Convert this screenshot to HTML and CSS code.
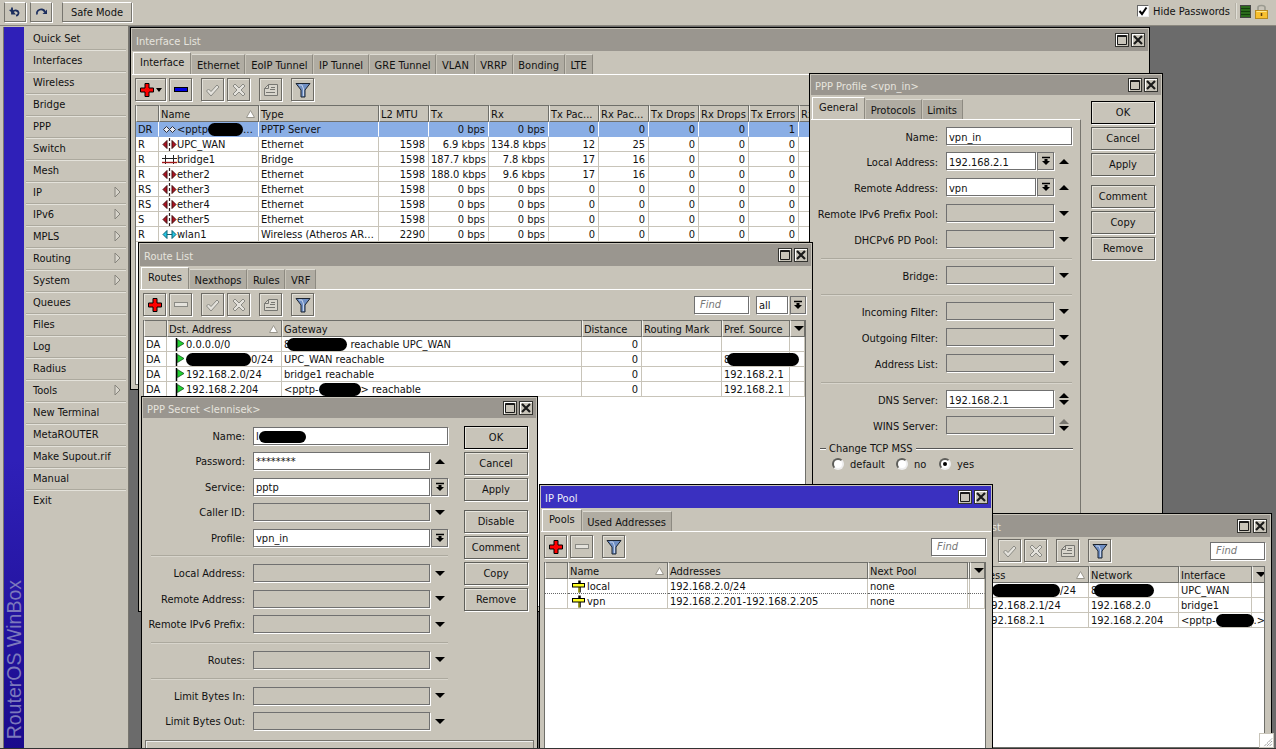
FILE: index.html
```html
<!DOCTYPE html>
<html lang="en">
<head>
<meta charset="utf-8">
<title>RouterOS WinBox</title>
<link rel="stylesheet" href="styles.css">
</head>
<body>
<svg class="defs" xmlns="http://www.w3.org/2000/svg">
  <symbol id="i-add" viewBox="0 0 16 16"><path d="M6 1.500h4v4.500h4.500v4H10v4.500H6V10H1.500V6H6z" fill="#f00" stroke="#000"/></symbol>
  <symbol id="i-minus" viewBox="0 0 16 16"><rect x="1.500" y="5.500" width="13" height="4" fill="#0000e0" stroke="#000"/></symbol>
  <symbol id="i-minus-off" viewBox="0 0 16 16"><rect x="1.500" y="5.500" width="13" height="4" fill="#e4e2dc" stroke="#8a8a84"/></symbol>
  <symbol id="i-check" viewBox="0 0 16 16"><path d="M1.500 9l2-2 2.500 2.500 6-6.500 2 2-8 9z" fill="#e4e2dc" stroke="#8a8a84"/></symbol>
  <symbol id="i-x" viewBox="0 0 16 16"><path d="M2 4l2-2 4 4 4-4 2 2-4 4 4 4-2 2-4-4-4 4-2-2 4-4z" fill="#e4e2dc" stroke="#8a8a84"/></symbol>
  <symbol id="i-note" viewBox="0 0 16 16"><path d="M5.500 2.500h9v11h-13v-7z" fill="#d8d5cc" stroke="#777772"/><path d="M5.500 2.500v4h-4M8 5.500h4M7 7.500h5M3 10.500h9" fill="none" stroke="#777772"/></symbol>
  <symbol id="i-filter" viewBox="0 0 16 16"><path d="M1 1.500h14l-5 6.500v7H6V8z" fill="#6f8fc4" stroke="#1c2430"/><path d="M4 3h3l1.500 4v7" fill="none" stroke="#c4d2ea"/></symbol>
  <symbol id="i-eth" viewBox="0 0 15 13"><path d="M5 2.500L1 6.500l4 4zM10 2.500l4 4-4 4z" fill="#b01020" stroke="#401010"/><path d="M7.500 0v3M7.500 5v3M7.500 10v3" stroke="#302020" stroke-width="1.200"/></symbol>
  <symbol id="i-bridge" viewBox="0 0 15 13"><path d="M3.500 2v9M11.500 2v9M0 5.500h15" stroke="#222" fill="none"/><path d="M0 9.500h15" stroke="#a01818" stroke-width="1.400"/></symbol>
  <symbol id="i-wlan" viewBox="0 0 15 13"><path d="M5 2.500L1 6.500l4 4zM10 2.500l4 4-4 4z" fill="#20c8e8" stroke="#106070"/><path d="M5 6.500h5" stroke="#106070"/></symbol>
  <symbol id="i-pptp" viewBox="0 0 15 13"><path d="M4.500 3.500L1.500 6.500l3 3 3-3zM10.500 3.500l-3 3 3 3 3-3z" fill="#e8ecf6" stroke="#30303a"/></symbol>
  <symbol id="i-flag" viewBox="0 0 10 13"><path d="M1.500 0v13" stroke="#000" stroke-width="1.500"/><path d="M2.500 1.500l6.500 4-6.500 4z" fill="#20d030" stroke="#0a4010" stroke-width=".7"/></symbol>
  <symbol id="i-pool" viewBox="0 0 14 13"><path d="M7.500 .500v12" stroke="#000" stroke-width="2.500"/><rect x=".5" y="3.500" width="12" height="3.500" fill="#ffff20" stroke="#000"/><path d="M7 7.500v5" stroke="#ffff20"/></symbol>
  <symbol id="i-max" viewBox="0 0 10 10"><path d="M.5 .5h9v9h-9zM.5 1.500h9" fill="none" stroke="#1a1a1a"/></symbol>
  <symbol id="i-close" viewBox="0 0 10 10"><path d="M1 1l8 8M9 1l-8 8" stroke="#1a1a1a" stroke-width="2.200"/></symbol>
  <symbol id="i-drop" viewBox="0 0 10 10"><path d="M1 1.500h8" stroke="#000" stroke-width="1.500"/><path d="M3.500 3v2H1l4 4 4-4H6.500V3z" fill="#000"/></symbol>
  <symbol id="i-sort" viewBox="0 0 9 8"><path d="M4.500 .5L8.500 7.500H.5z" fill="#fff" stroke="#99968c"/></symbol>
  <symbol id="i-right" viewBox="0 0 7 12"><path d="M1 1l5 5-5 5z" fill="#d8d5cc" stroke="#86847c"/></symbol>
  <symbol id="i-undo" viewBox="0 0 14 12"><path d="M4 1.500v6h2L4.800 6C6 3.800 10 4 10.500 6.500c.3 1.700-1 3-2.500 3.200" fill="none" stroke="#1c2e5e" stroke-width="1.800"/><path d="M1 4l4 4V3z" fill="#1c2e5e"/></symbol>
  <symbol id="i-redo" viewBox="0 0 14 12"><path d="M3 8.500C2 5.500 5 3 8 3.500c1.800.3 2.500 1.500 2.500 2.500" fill="none" stroke="#1c2e5e" stroke-width="1.800"/><path d="M13 3.500l-4.500 4.500h4.500z" fill="#1c2e5e"/></symbol>
  <symbol id="i-lock" viewBox="0 0 13 15"><path d="M3 7V3.500C3 .8 10 .8 10 3.500V7" fill="none" stroke="#9a9a90" stroke-width="1.600"/><rect x=".5" y="6.500" width="12" height="8" fill="#f8c030" stroke="#b88a20"/><path d="M1.500 7.500h10" stroke="#ffe890"/><path d="M6.500 9v3" stroke="#604010" stroke-width="1.500"/></symbol>
</svg>

<div class="app">
  <header class="topbar">
    <button class="tbtn tbtn-ic"><svg class="ic14"><use href="#i-undo"/></svg></button>
    <button class="tbtn tbtn-ic"><svg class="ic14"><use href="#i-redo"/></svg></button>
    <button class="tbtn tbtn-safe">Safe Mode</button>
    <div class="top-right">
      <span class="checkbox"><svg class="chk" viewBox="0 0 10 10"><path d="M1.500 5l2.500 3L8.500 1.500" fill="none" stroke="#000" stroke-width="2"/></svg></span>
      <span class="hide-label">Hide Passwords</span>
      <span class="vsep"></span>
      <span class="led"></span>
      <svg class="lock"><use href="#i-lock"/></svg>
    </div>
  </header>

  <div class="main">
    <aside class="sidebar">
      <div class="brand"><span class="brand-text">RouterOS WinBox</span></div>
      <nav class="menu">
        <div class="mi">Quick Set</div>
        <div class="mi">Interfaces</div>
        <div class="mi">Wireless</div>
        <div class="mi">Bridge</div>
        <div class="mi">PPP</div>
        <div class="mi">Switch</div>
        <div class="mi">Mesh</div>
        <div class="mi">IP<svg class="arrow"><use href="#i-right"/></svg></div>
        <div class="mi">IPv6<svg class="arrow"><use href="#i-right"/></svg></div>
        <div class="mi">MPLS<svg class="arrow"><use href="#i-right"/></svg></div>
        <div class="mi">Routing<svg class="arrow"><use href="#i-right"/></svg></div>
        <div class="mi">System<svg class="arrow"><use href="#i-right"/></svg></div>
        <div class="mi">Queues</div>
        <div class="mi">Files</div>
        <div class="mi">Log</div>
        <div class="mi">Radius</div>
        <div class="mi">Tools<svg class="arrow"><use href="#i-right"/></svg></div>
        <div class="mi">New Terminal</div>
        <div class="mi">MetaROUTER</div>
        <div class="mi">Make Supout.rif</div>
        <div class="mi">Manual</div>
        <div class="mi">Exit</div>
      </nav>
    </aside>

    <section class="desktop">

      <!-- Interface List -->
      <div class="win win-iface">
        <div class="title"><span>Interface List</span><span class="wbtns"><span class="wbtn"><svg class="ic10"><use href="#i-max"/></svg></span><span class="wbtn"><svg class="ic10"><use href="#i-close"/></svg></span></span></div>
        <div class="tabs">
          <span class="tab on">Interface</span><span class="tab">Ethernet</span><span class="tab">EoIP Tunnel</span><span class="tab">IP Tunnel</span><span class="tab">GRE Tunnel</span><span class="tab">VLAN</span><span class="tab">VRRP</span><span class="tab">Bonding</span><span class="tab">LTE</span>
        </div>
        <div class="panel">
          <div class="toolbar">
            <button class="ib ib-wide"><svg class="ic16"><use href="#i-add"/></svg><span class="caret"></span></button>
            <button class="ib"><svg class="ic16"><use href="#i-minus"/></svg></button>
            <button class="ib sp"><svg class="ic16"><use href="#i-check"/></svg></button>
            <button class="ib"><svg class="ic16"><use href="#i-x"/></svg></button>
            <button class="ib sp"><svg class="ic16"><use href="#i-note"/></svg></button>
            <button class="ib sp"><svg class="ic16"><use href="#i-filter"/></svg></button>
          </div>
          <div class="list">
            <table class="grid grid-iface">
              <colgroup><col class="w23"><col class="w100"><col class="w120"><col class="w50"><col class="w60"><col class="w60"><col class="w50"><col class="w50"><col class="w50"><col class="w50"><col class="w50"><col class="w60"></colgroup>
              <thead><tr><th></th><th class="sorted">Name<svg class="sort"><use href="#i-sort"/></svg></th><th>Type</th><th>L2 MTU</th><th>Tx</th><th>Rx</th><th>Tx Pac...</th><th>Rx Pac...</th><th>Tx Drops</th><th>Rx Drops</th><th>Tx Errors</th><th>Rx Errors</th></tr></thead>
              <tbody>
                <tr class="sel"><td>DR</td><td class="nm"><svg class="ic-if"><use href="#i-pptp"/></svg>&lt;pptp<span class="pill p35"></span>e...</td><td>PPTP Server</td><td class="r"></td><td class="r">0 bps</td><td class="r">0 bps</td><td class="r">0</td><td class="r">0</td><td class="r">0</td><td class="r">0</td><td class="r">1</td><td class="r">0</td></tr>
                <tr><td>R</td><td class="nm"><svg class="ic-if"><use href="#i-eth"/></svg>UPC_WAN</td><td>Ethernet</td><td class="r">1598</td><td class="r">6.9 kbps</td><td class="r">134.8 kbps</td><td class="r">12</td><td class="r">25</td><td class="r">0</td><td class="r">0</td><td class="r">0</td><td class="r">0</td></tr>
                <tr><td>R</td><td class="nm"><svg class="ic-if"><use href="#i-bridge"/></svg>bridge1</td><td>Bridge</td><td class="r">1598</td><td class="r">187.7 kbps</td><td class="r">7.8 kbps</td><td class="r">17</td><td class="r">16</td><td class="r">0</td><td class="r">0</td><td class="r">0</td><td class="r">0</td></tr>
                <tr><td>R</td><td class="nm"><svg class="ic-if"><use href="#i-eth"/></svg>ether2</td><td>Ethernet</td><td class="r">1598</td><td class="r">188.0 kbps</td><td class="r">9.6 kbps</td><td class="r">17</td><td class="r">16</td><td class="r">0</td><td class="r">0</td><td class="r">0</td><td class="r">0</td></tr>
                <tr><td>RS</td><td class="nm"><svg class="ic-if"><use href="#i-eth"/></svg>ether3</td><td>Ethernet</td><td class="r">1598</td><td class="r">0 bps</td><td class="r">0 bps</td><td class="r">0</td><td class="r">0</td><td class="r">0</td><td class="r">0</td><td class="r">0</td><td class="r">0</td></tr>
                <tr><td>RS</td><td class="nm"><svg class="ic-if"><use href="#i-eth"/></svg>ether4</td><td>Ethernet</td><td class="r">1598</td><td class="r">0 bps</td><td class="r">0 bps</td><td class="r">0</td><td class="r">0</td><td class="r">0</td><td class="r">0</td><td class="r">0</td><td class="r">0</td></tr>
                <tr><td>S</td><td class="nm"><svg class="ic-if"><use href="#i-eth"/></svg>ether5</td><td>Ethernet</td><td class="r">1598</td><td class="r">0 bps</td><td class="r">0 bps</td><td class="r">0</td><td class="r">0</td><td class="r">0</td><td class="r">0</td><td class="r">0</td><td class="r">0</td></tr>
                <tr><td>R</td><td class="nm"><svg class="ic-if"><use href="#i-wlan"/></svg>wlan1</td><td class="ell">Wireless (Atheros AR9300)</td><td class="r">2290</td><td class="r">0 bps</td><td class="r">0 bps</td><td class="r">0</td><td class="r">0</td><td class="r">0</td><td class="r">0</td><td class="r">0</td><td class="r">0</td></tr>
              </tbody>
            </table>
          </div>
        </div>
      </div>

      <!-- PPP Profile -->
      <div class="win win-profile">
        <div class="title t20"><span>PPP Profile &lt;vpn_in&gt;</span><span class="wbtns"><span class="wbtn"><svg class="ic10"><use href="#i-max"/></svg></span><span class="wbtn"><svg class="ic10"><use href="#i-close"/></svg></span></span></div>
        <div class="dlg">
          <div class="dlg-left">
            <div class="tabs tabs-dlg"><span class="tab on">General</span><span class="tab">Protocols</span><span class="tab">Limits</span></div>
            <div class="form form-profile">
              <div class="row row-first"><label>Name:</label><span class="inp full">vpn_in</span></div>
              <div class="row"><label>Local Address:</label><span class="inp short">192.168.2.1</span><span class="dd"><svg class="ic10"><use href="#i-drop"/></svg></span><span class="tri up"></span></div>
              <div class="row"><label>Remote Address:</label><span class="inp short">vpn</span><span class="dd"><svg class="ic10"><use href="#i-drop"/></svg></span><span class="tri up"></span></div>
              <div class="row"><label>Remote IPv6 Prefix Pool:</label><span class="inp off mid"></span><span class="tri down"></span></div>
              <div class="row"><label>DHCPv6 PD Pool:</label><span class="inp off mid"></span><span class="tri down"></span></div>
              <div class="sep"></div>
              <div class="row"><label>Bridge:</label><span class="inp off mid"></span><span class="tri down"></span></div>
              <div class="sep"></div>
              <div class="row"><label>Incoming Filter:</label><span class="inp off mid"></span><span class="tri down"></span></div>
              <div class="row"><label>Outgoing Filter:</label><span class="inp off mid"></span><span class="tri down"></span></div>
              <div class="row"><label>Address List:</label><span class="inp off mid"></span><span class="tri down"></span></div>
              <div class="sep"></div>
              <div class="row"><label>DNS Server:</label><span class="inp mid">192.168.2.1</span><span class="updown"><span class="tri up"></span><span class="tri down"></span></span></div>
              <div class="row"><label>WINS Server:</label><span class="inp off mid"></span><span class="updown"><span class="tri up dim"></span><span class="tri down"></span></span></div>
              <div class="mss"><span class="mss-dash"></span><span class="mss-text">Change TCP MSS</span><span class="mss-line"></span></div>
              <div class="radios">
                <span class="radio"></span><span class="rlabel r-default">default</span>
                <span class="radio"></span><span class="rlabel r-no">no</span>
                <span class="radio checked"></span><span class="rlabel">yes</span>
              </div>
            </div>
          </div>
          <div class="btns btns-profile">
            <button class="btn def">OK</button>
            <button class="btn">Cancel</button>
            <button class="btn">Apply</button>
            <button class="btn grp">Comment</button>
            <button class="btn">Copy</button>
            <button class="btn">Remove</button>
          </div>
        </div>
      </div>

      <!-- Route List -->
      <div class="win win-route">
        <div class="title"><span>Route List</span><span class="wbtns"><span class="wbtn"><svg class="ic10"><use href="#i-max"/></svg></span><span class="wbtn"><svg class="ic10"><use href="#i-close"/></svg></span></span></div>
        <div class="tabs"><span class="tab on">Routes</span><span class="tab">Nexthops</span><span class="tab">Rules</span><span class="tab">VRF</span></div>
        <div class="panel">
          <div class="toolbar">
            <button class="ib"><svg class="ic16"><use href="#i-add"/></svg></button>
            <button class="ib"><svg class="ic16"><use href="#i-minus-off"/></svg></button>
            <button class="ib sp"><svg class="ic16"><use href="#i-check"/></svg></button>
            <button class="ib"><svg class="ic16"><use href="#i-x"/></svg></button>
            <button class="ib sp"><svg class="ic16"><use href="#i-note"/></svg></button>
            <button class="ib sp"><svg class="ic16"><use href="#i-filter"/></svg></button>
            <span class="find push">Find</span>
            <span class="inp all">all</span>
            <span class="dd dd-all"><svg class="ic10"><use href="#i-drop"/></svg></span>
          </div>
          <div class="list">
            <table class="grid grid-route">
              <colgroup><col class="w23"><col class="w115"><col class="w300"><col class="w60"><col class="w80"><col class="w68"><col class="w15"></colgroup>
              <thead><tr><th></th><th class="sorted">Dst. Address<svg class="sort"><use href="#i-sort"/></svg></th><th>Gateway</th><th>Distance</th><th>Routing Mark</th><th>Pref. Source</th><th class="more"><span class="tri down"></span></th></tr></thead>
              <tbody>
                <tr><td>DA</td><td class="dst"><svg class="ic-flag"><use href="#i-flag"/></svg>0.0.0.0/0</td><td>8<span class="pill p60 back"></span> reachable UPC_WAN</td><td class="r">0</td><td></td><td></td><td></td></tr>
                <tr><td>DA</td><td class="dst"><svg class="ic-flag"><use href="#i-flag"/></svg><span class="pill p65"></span>0/24</td><td>UPC_WAN reachable</td><td class="r">0</td><td></td><td class="vis">8<span class="pill p70 back"></span></td><td></td></tr>
                <tr><td>DA</td><td class="dst"><svg class="ic-flag"><use href="#i-flag"/></svg>192.168.2.0/24</td><td>bridge1 reachable</td><td class="r">0</td><td></td><td>192.168.2.1</td><td></td></tr>
                <tr><td>DA</td><td class="dst"><svg class="ic-flag"><use href="#i-flag"/></svg>192.168.2.204</td><td>&lt;pptp-<span class="pill p42"></span>&gt; reachable</td><td class="r">0</td><td></td><td>192.168.2.1</td><td></td></tr>
              </tbody>
            </table>
          </div>
        </div>
      </div>

      <!-- Address List -->
      <div class="win win-addr">
        <div class="title"><span>Address List</span><span class="wbtns"><span class="wbtn"><svg class="ic10"><use href="#i-max"/></svg></span><span class="wbtn"><svg class="ic10"><use href="#i-close"/></svg></span></span></div>
        <div class="panel panel-plain">
          <div class="toolbar">
            <button class="ib"><svg class="ic16"><use href="#i-add"/></svg></button>
            <button class="ib"><svg class="ic16"><use href="#i-minus-off"/></svg></button>
            <button class="ib sp"><svg class="ic16"><use href="#i-check"/></svg></button>
            <button class="ib"><svg class="ic16"><use href="#i-x"/></svg></button>
            <button class="ib sp"><svg class="ic16"><use href="#i-note"/></svg></button>
            <button class="ib sp"><svg class="ic16"><use href="#i-filter"/></svg></button>
            <span class="find push">Find</span>
          </div>
          <div class="list">
            <table class="grid grid-addr">
              <colgroup><col class="w23"><col class="w125"><col class="w90"><col class="w73"><col class="w15"></colgroup>
              <thead><tr><th></th><th class="sorted">Address<svg class="sort"><use href="#i-sort"/></svg></th><th>Network</th><th>Interface</th><th class="more"><span class="tri down"></span></th></tr></thead>
              <tbody>
                <tr><td>D</td><td class="addr"><span class="pill p68"></span>/24</td><td>8<span class="pill p60 back"></span></td><td>UPC_WAN</td><td></td></tr>
                <tr><td></td><td class="addr">192.168.2.1/24</td><td>192.168.2.0</td><td>bridge1</td><td></td></tr>
                <tr><td>D</td><td class="addr">192.168.2.1</td><td>192.168.2.204</td><td class="if">&lt;pptp-<span class="pill p38"></span>.&gt;</td><td></td></tr>
              </tbody>
            </table>
          </div>
        </div>
      </div>

      <!-- PPP Secret -->
      <div class="win win-secret">
        <div class="title t20"><span>PPP Secret &lt;lennisek&gt;</span><span class="wbtns"><span class="wbtn"><svg class="ic10"><use href="#i-max"/></svg></span><span class="wbtn"><svg class="ic10"><use href="#i-close"/></svg></span></span></div>
        <div class="dlg">
          <div class="form form-secret">
            <div class="row"><label>Name:</label><span class="inp full">l<span class="pill p47"></span></span></div>
            <div class="row"><label>Password:</label><span class="inp short">********</span><span class="tri up"></span></div>
            <div class="row"><label>Service:</label><span class="inp short">pptp</span><span class="dd"><svg class="ic10"><use href="#i-drop"/></svg></span></div>
            <div class="row"><label>Caller ID:</label><span class="inp short off"></span><span class="tri down"></span></div>
            <div class="row"><label>Profile:</label><span class="inp short">vpn_in</span><span class="dd"><svg class="ic10"><use href="#i-drop"/></svg></span></div>
            <div class="sep"></div>
            <div class="row"><label>Local Address:</label><span class="inp short off"></span><span class="tri down"></span></div>
            <div class="row"><label>Remote Address:</label><span class="inp short off"></span><span class="tri down"></span></div>
            <div class="row"><label>Remote IPv6 Prefix:</label><span class="inp short off"></span><span class="tri down"></span></div>
            <div class="sep"></div>
            <div class="row"><label>Routes:</label><span class="inp short off"></span><span class="tri down"></span></div>
            <div class="sep"></div>
            <div class="row"><label>Limit Bytes In:</label><span class="inp short off"></span><span class="tri down"></span></div>
            <div class="row"><label>Limit Bytes Out:</label><span class="inp short off"></span><span class="tri down"></span></div>
          </div>
          <div class="btns btns-secret">
            <button class="btn def">OK</button>
            <button class="btn">Cancel</button>
            <button class="btn">Apply</button>
            <button class="btn grp">Disable</button>
            <button class="btn">Comment</button>
            <button class="btn">Copy</button>
            <button class="btn">Remove</button>
          </div>
        </div>
        <div class="groupbox"></div>
      </div>

      <!-- IP Pool -->
      <div class="win win-pool active">
        <div class="title"><span>IP Pool</span><span class="wbtns"><span class="wbtn"><svg class="ic10"><use href="#i-max"/></svg></span><span class="wbtn"><svg class="ic10"><use href="#i-close"/></svg></span></span></div>
        <div class="tabs"><span class="tab on">Pools</span><span class="tab">Used Addresses</span></div>
        <div class="panel">
          <div class="toolbar">
            <button class="ib"><svg class="ic16"><use href="#i-add"/></svg></button>
            <button class="ib"><svg class="ic16"><use href="#i-minus-off"/></svg></button>
            <button class="ib sp"><svg class="ic16"><use href="#i-filter"/></svg></button>
            <span class="find push">Find</span>
          </div>
          <div class="list">
            <table class="grid grid-pool">
              <colgroup><col class="w23"><col class="w100"><col class="w200"><col class="w100"><col class="w2"><col class="w15"></colgroup>
              <thead><tr><th></th><th class="sorted">Name<svg class="sort"><use href="#i-sort"/></svg></th><th>Addresses</th><th>Next Pool</th><th></th><th class="more"><span class="tri down"></span></th></tr></thead>
              <tbody>
                <tr class="focus"><td></td><td class="pool"><svg class="ic-pool"><use href="#i-pool"/></svg>local</td><td>192.168.2.0/24</td><td>none</td><td></td><td></td></tr>
                <tr><td></td><td class="pool"><svg class="ic-pool"><use href="#i-pool"/></svg>vpn</td><td>192.168.2.201-192.168.2.205</td><td>none</td><td></td><td></td></tr>
              </tbody>
            </table>
          </div>
        </div>
      </div>

      <svg class="grip" viewBox="0 0 15 15"><path d="M5 14L14 5M8 14l6-6M11 14l3-3" stroke="#777" stroke-dasharray="1.500 .7"/></svg>
    </section>
  </div>
</div>
</body>
</html>
```

FILE: styles.css
```css
* { box-sizing: border-box; }
html, body { margin: 0; width: 1276px; height: 749px; overflow: hidden; }
body {
  background: #c8c4b9;
  color: #111;
  font-family: "DejaVu Sans Condensed", "DejaVu Sans", sans-serif;
  font-stretch: condensed;
  font-size: 11px;
  line-height: 13px;
}
.defs { position: absolute; width: 0; height: 0; }
button { font: inherit; font-stretch: condensed; color: inherit; padding: 0; margin: 0; background: #c8c4b9; }

.app { width: 1276px; height: 749px; display: flex; flex-direction: column; position: relative; overflow: hidden; }
.app::after { content: ""; position: absolute; left: 0; right: 0; bottom: 0; height: 1px; background: #333; z-index: 20; }

/* top bar */
.topbar { height: 26px; flex: none; display: flex; align-items: flex-start; padding: 2px 8px 0 4px; border-bottom: 1px solid #8a877e; background: #c8c4b9; }
.tbtn { height: 20px; border: 1px solid #77756e; border-top-color: #fff; box-shadow: 1px 1px 0 #fff; display: flex; align-items: center; justify-content: center; margin-right: 4px; }
.tbtn-ic { width: 22px; }
.tbtn-safe { width: 70px; margin-left: 6px; }
.ic14 { width: 14px; height: 12px; }
.top-right { margin-left: auto; display: flex; align-items: center; height: 18px; }
.checkbox { width: 12px; height: 12px; background: #fff; border: 1px solid; border-color: #666 #eee #eee #666; display: flex; align-items: center; justify-content: center; }
.chk { width: 10px; height: 10px; }
.hide-label { margin-left: 4px; width: 77px; white-space: nowrap; }
.vsep { width: 2px; height: 16px; margin: 0 3px 0 5px; background: #b4b1a6; border-right: 1px solid #e2e0d8; }
.led { width: 11px; height: 13px; border: 1px solid #444; background: repeating-linear-gradient(#2a6a1a 0, #2a6a1a 2px, #123f0c 2px, #123f0c 3px); }
.lock { width: 13px; height: 15px; margin-left: 4px; }

/* sidebar */
.main { flex: 1; display: flex; min-height: 0; }
.sidebar { width: 129px; flex: none; display: flex; padding: 1px 0 0 4px; border-left: 1px solid #c8c4b9; border-right: 1px solid #77756e; position: relative; }
.sidebar::before { content: ""; width: 1px; background: #77756e; margin-left: -2px; margin-right: 1px; }
.brand { width: 20px; flex: none; margin-left: -1px; background: linear-gradient(#2f20b8 0, #2f20b8 60%, #1a0a8c 100%); display: flex; align-items: flex-end; justify-content: center; padding-bottom: 10px; }
.brand-text { writing-mode: vertical-rl; transform: rotate(180deg); font-family: "Liberation Sans", sans-serif; font-stretch: normal; font-size: 19.500px; line-height: 20px; color: #7c79bc; white-space: nowrap; }
.menu { flex: 1; padding: 1px 2px 0; }
.mi { height: 22px; padding: 4px 0 0 7px; border-bottom: 1px solid #aca99e; box-shadow: 0 1px 0 #e4e2da; position: relative; white-space: nowrap; }
.mi:nth-last-child(1) { border: 0; box-shadow: none; }
.arrow { width: 7px; height: 12px; position: absolute; right: 5px; top: 4px; }

/* desktop & windows */
.desktop { flex: 1; background: #6b6b6b; position: relative; overflow: hidden; }
.win { position: absolute; background: #c8c4b9; border: 1px solid #000; padding: 1px; display: flex; flex-direction: column; box-shadow: inset 0 0 0 1px #c8c4b9; }
.win-iface { left: 1px; top: 1px; width: 1020px; height: 363px; }
.win-profile { left: 680px; top: 47px; width: 354px; height: 480px; }
.win-route { left: 9px; top: 216px; width: 675px; height: 370px; }
.win-addr { left: 806px; top: 487px; width: 337px; height: 240px; }
.win-secret { left: 12px; top: 370px; width: 397px; height: 380px; }
.win-pool { left: 410px; top: 458px; width: 454px; height: 270px; }

.title { height: 22px; flex: none; background: #9a968f; color: #e6e4de; display: flex; align-items: center; justify-content: space-between; padding: 0 3px 0 4px; margin-bottom: 1px; white-space: nowrap; }
.title > span:first-child { padding-top: 2px; }
.title.t20 { height: 20px; margin-bottom: 2px; }
.win-pool .title { background: #3a30c0; color: #eeeef8; }
.wbtns { display: flex; gap: 2px; }
.wbtn { width: 14px; height: 14px; background: #c8c4b9; border: 1px solid #33332f; box-shadow: inset 1px 1px 0 #fff; display: flex; align-items: center; justify-content: center; }
.ic10 { width: 10px; height: 10px; display: block; }

.tabs { height: 22px; flex: none; display: flex; align-items: flex-end; padding-left: 1px; gap: 1px; }
.tab { height: 20px; padding: 4px 4.750px 0; background: #b0aca2; border-top: 1px solid #dedcd4; border-right: 1px solid #8d8a81; white-space: nowrap; }
.tab.on { height: 22px; padding: 3px 6px 0 6px; background: #c8c4b9; border-top: 1px solid #fff; border-left: 1px solid #fff; margin-left: 0; }

.panel { flex: 1; min-height: 0; border-top: 1px solid #fff; padding: 3px 5px 3px 3px; display: flex; flex-direction: column; gap: 4px; }
.panel-plain { border-top: 0; padding-top: 1px; }

.toolbar { height: 23px; flex: none; display: flex; align-items: center; gap: 3px; }
.ib { width: 23px; height: 23px; border: 1px solid #6d6b65; box-shadow: 1px 1px 0 #fff, inset 1px 1px 0 #e4e2da; display: flex; align-items: center; justify-content: center; flex: none; }
.ib-wide { width: 31px; gap: 1px; }
.ib.sp { margin-left: 6px; }
.ic16 { width: 16px; height: 16px; display: block; }
.caret { width: 0; height: 0; border: 3.500px solid transparent; border-top: 4px solid #000; border-bottom: 0; }
.find { width: 55px; height: 18px; border: 1px solid #707070; box-shadow: 1px 1px 0 #fff; background: #fff; color: #777; font-style: italic; padding: 1px 0 0 5px; }
.push { margin-left: auto; }
.inp.all { width: 32px; margin-left: 4px; flex: none; }

/* lists */
.list { flex: 1; min-height: 0; background: #fff; border: 1px solid #6f6f6a; border-top: 0; overflow: hidden; position: relative; }
.grid { border-collapse: separate; border-spacing: 0; table-layout: fixed; }
.grid-iface { width: 723px; }
.grid-route { width: 661px; }
.grid-addr { width: 326px; }
.grid-pool { width: 440px; }
.w2 { width: 2px; } .w15 { width: 15px; } .w23 { width: 23px; } .w50 { width: 50px; } .w60 { width: 60px; }
.w68 { width: 68px; } .w73 { width: 73px; } .w80 { width: 80px; } .w90 { width: 90px; } .w100 { width: 100px; }
.w115 { width: 115px; } .w120 { width: 120px; } .w125 { width: 125px; } .w200 { width: 200px; } .w300 { width: 300px; }
.grid th { height: 17px; padding: 1px 2px 0 1px; font-weight: normal; text-align: left; background: #c8c4b9; border-top: 1px solid #6f6f6a; border-bottom: 1px solid #6f6f6a; border-right: 1px solid #6f6f6a; border-left: 1px solid #f4f3ee; overflow: hidden; white-space: nowrap; position: relative; }
.grid th.more { padding: 0 0 0 3px; }
.sort { width: 9px; height: 8px; position: absolute; right: 3px; top: 4px; }
.grid td { height: 15px; padding: 0 2px; border-right: 1px solid #c8c4b9; border-bottom: 1px solid #c8c4b9; overflow: hidden; white-space: nowrap; vertical-align: middle; }
.grid td.r { text-align: right; padding-right: 3px; }
.grid td.ell, .grid td.nm { text-overflow: ellipsis; }
.grid td.nm { padding-left: 3px; }
.grid td.vis { overflow: visible; }
.grid td.dst { padding-left: 8px; }
.grid td.pool { padding-left: 4px; }
.grid td.addr { padding-left: 21px; }
.grid td.if { padding-left: 2px; overflow: visible; }
.sel td { background: #8aaee5; border-right-color: #fff; border-bottom-color: #8aaee5; }
.focus td { border-bottom: 1px dotted #666; }
.ic-if { width: 15px; height: 13px; vertical-align: -3px; }
.ic-flag { width: 10px; height: 13px; vertical-align: -3px; margin-right: 1px; }
.ic-pool { width: 14px; height: 13px; vertical-align: -3px; margin-right: 1px; }

.pill { display: inline-block; height: 13px; background: #000; border-radius: 7px; vertical-align: -3px; }
.p35 { width: 35px; } .p38 { width: 38px; } .p42 { width: 42px; } .p47 { width: 47px; height: 12px; } .p60 { width: 60px; } .p65 { width: 65px; } .p68 { width: 68px; margin-left: 7px; } .p70 { width: 72px; }
.pill.back { margin-left: -3px; }

/* dialogs */
.dlg { flex: 1; min-height: 0; display: flex; align-items: flex-start; }
.dlg-left { width: 270px; flex: none; display: flex; flex-direction: column; align-self: stretch; }
.tabs-dlg { padding-left: 1px; }
.form { display: flex; flex-direction: column; }
.form-profile { flex: 1; border-top: 1px solid #fff; border-right: 1px solid #77756e; padding: 7px 8px 0 0; gap: 8px; }
.form-secret { width: 305px; margin-top: 7px; gap: 7.4px; flex: none; }
.row { display: flex; align-items: center; height: 18px; flex: none; }
.row-first { margin-bottom: -1px; }
.row label { text-align: right; flex: none; white-space: nowrap; margin-right: 8px; padding-top: 1px; }
.form-profile .row label { width: 127px; padding-top: 3px; }
.form-secret .row label { width: 102px; }
.inp { height: 18px; border: 1px solid #707070; background: #fff; box-shadow: 1px 1px 0 #fff; padding: 2px 2px 0 2px; white-space: nowrap; overflow: hidden; display: block; }
.form-profile .inp { padding-top: 3px; }
.inp.off { background: #c8c4b9; }
.form-profile .full { width: 126px; }
.form-profile .short { width: 90px; }
.form-profile .mid { width: 108px; }
.form-secret .full { width: 195px; }
.form-secret .short { width: 177px; }
.dd { width: 17px; height: 18px; margin-left: 1px; border: 1px solid #707070; box-shadow: 1px 1px 0 #fff; background: #c8c4b9; display: flex; align-items: center; justify-content: center; flex: none; }
.dd.dd-all { width: 16px; margin-left: -1px; }
.tri { width: 0; height: 0; border-left: 5px solid transparent; border-right: 5px solid transparent; display: block; flex: none; }
.tri.down { border-top: 5px solid #000; }
.tri.up { border-bottom: 5px solid #000; }
.tri.dim { border-bottom-color: #77756e; }
.row > .tri { margin-left: 5px; }
.updown { display: flex; flex-direction: column; gap: 2px; margin-left: 5px; }
.sep { height: 2px; flex: none; background: #aca99e; border-bottom: 1px solid #d8d5cc; }
.form-profile .sep { margin: 2px 0 -2px 10px; width: 251px; }
.form-secret .sep { margin: 1.500px 0 -.5px 8px; width: 297px; }
.mss { display: flex; align-items: center; gap: 3px; margin: 0 0 0 9px; width: 253px; height: 13px; }
.mss-dash { width: 6px; height: 1px; background: #555; box-shadow: 0 1px 0 #fff; }
.mss-line { flex: 1; height: 1px; background: #555; box-shadow: 0 1px 0 #fff; }
.radios { display: flex; align-items: center; margin: -6px 0 0 21px; height: 14px; }
.radio { width: 12px; height: 12px; border-radius: 50%; background: #fff; border: 2px solid #5e5e5a; border-right-color: #eee; border-bottom-color: #eee; position: relative; flex: none; }
.radio.checked::after { content: ""; position: absolute; left: 2px; top: 2px; width: 4px; height: 4px; border-radius: 50%; background: #000; }
.rlabel { margin-left: 6px; }
.r-default { width: 46px; }
.r-no { width: 25px; }

.btns { display: flex; flex-direction: column; gap: 3px; width: 64px; flex: none; }
.btns-profile { margin: 4px 0 0 10px; }
.btns-secret { margin: 6px 0 0 16px; }
.btn { height: 23px; width: 64px; border: 1px solid #5f5f5a; box-shadow: 1px 1px 0 #fff, inset 1px 1px 0 #e8e6de; }
.btn.def { border-color: #000; }
.btn.grp { margin-top: 6px; }
.groupbox { position: absolute; left: 3px; right: 3px; top: 343px; height: 40px; border: 1px solid #77756e; box-shadow: inset 1px 1px 0 #eee; }

.grip { position: absolute; left: 1130px; bottom: 1px; width: 15px; height: 15px; background: #fff; border: 1px solid #c8c4b9; }
```
